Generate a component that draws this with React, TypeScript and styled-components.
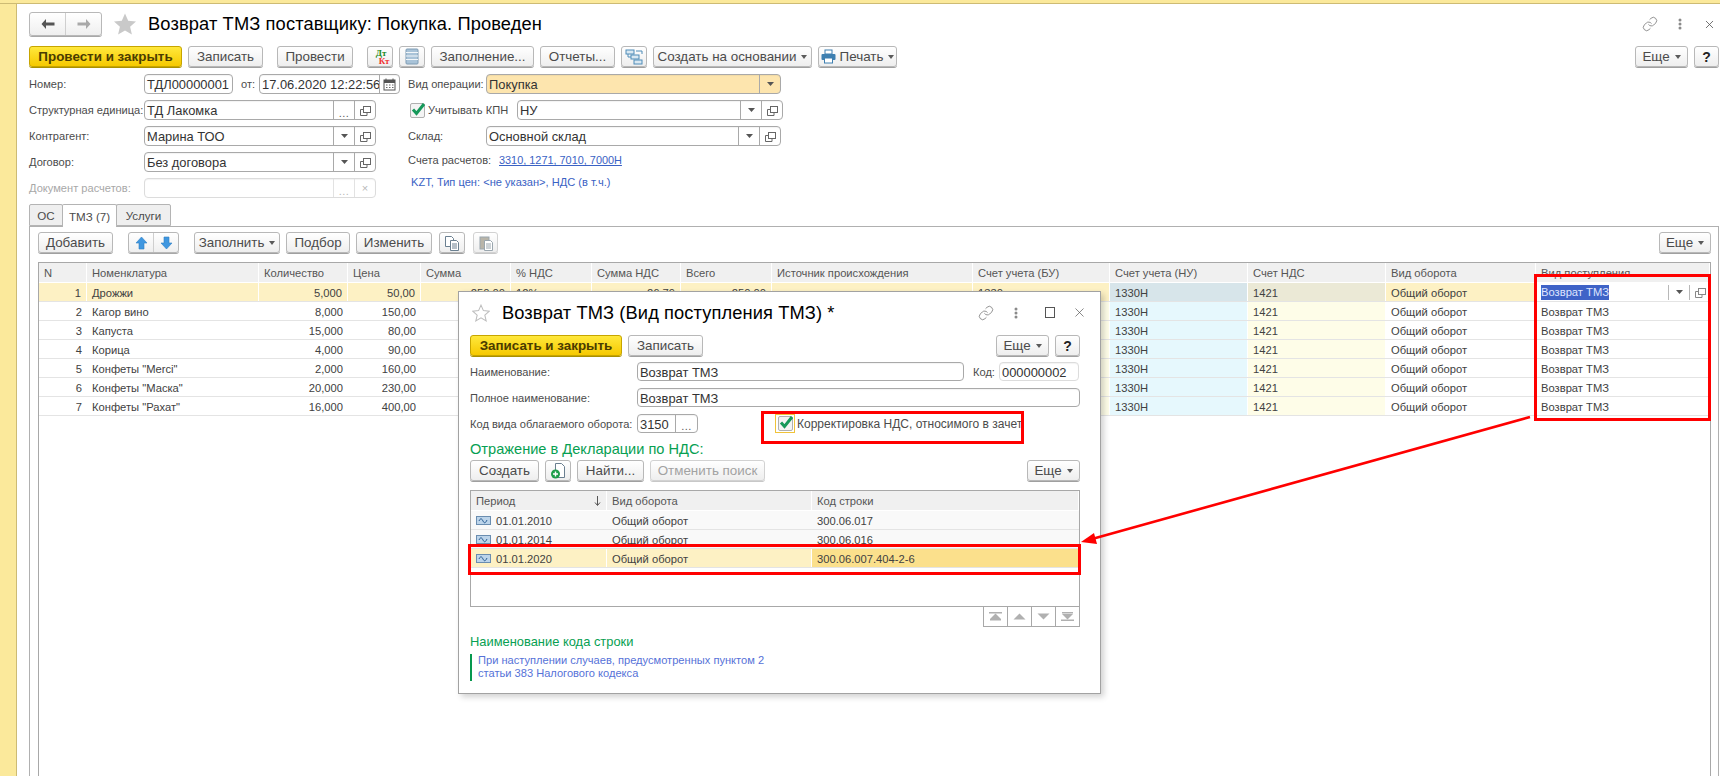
import React from "react";
import styled, { createGlobalStyle } from "styled-components";
import { Link as LinkIcon, X } from "lucide-react";

const Global = createGlobalStyle`
  html, body { margin: 0; padding: 0; background: #fff; }
  * { box-sizing: border-box; }
  body { font-family: "Liberation Sans", Arial, sans-serif; font-size: 12px; color: #4b4b4b; }
`;

const Page = styled.div`
  position: relative; width: 1720px; height: 776px; overflow: hidden;
  display: flex; flex-direction: column; background: #fff;
`;
const TopStrip = styled.div`height: 4px; flex: none; background: #fbe99b; border-bottom: 1px solid #cdbb74;`;
const Body = styled.div`flex: 1; display: flex; min-height: 0;`;
const SideStrip = styled.div`width: 17px; flex: none; background: #fbe99b; border-right: 1px solid #cdbb74;`;
const Main = styled.div`flex: 1; display: flex; flex-direction: column; padding: 8px 1px 0 12px; min-width: 0;`;

const TitleRow = styled.div`display: flex; align-items: center; height: 24px;`;
const NavGroup = styled.div<{ $w?: number; $h?: number; $ml?: number }>`
  display: flex; width: ${p => p.$w ?? 73}px; height: ${p => p.$h ?? 24}px; margin-left: ${p => p.$ml ?? 0}px; flex: none;
  border: 1px solid #b8b8b8; border-radius: 3px;
  background: linear-gradient(#fff, #efefef); box-shadow: 0 1px 0 #a8a8a8;
`;
const NavPart = styled.div<{ $line?: boolean }>`
  flex: 1; display: flex; align-items: center; justify-content: center;
  ${p => (p.$line ? "border-left: 1px solid #cfcfcf;" : "")}
`;
const Title = styled.h1`
  margin: 0; font-size: 18.3px; font-weight: 400; color: #000; white-space: nowrap; letter-spacing: 0.12px;
`;
const Spacer = styled.div`flex: 1;`;
const WindowTools = styled.div`display: flex; align-items: center; color: #777;`;
const ToolSlot = styled.div<{ $w: number }>`width: ${p => p.$w}px; flex: none; display: flex; justify-content: center; align-items: center;`;

const Toolbar = styled.div<{ $top?: number; $gap?: number }>`
  display: flex; align-items: flex-start; height: 22px; flex: none;
  margin-top: ${p => p.$top ?? 0}px; gap: ${p => p.$gap ?? 6}px;
`;
const Btn = styled.button<{ $w: number; $ml?: number; $off?: boolean }>`
  width: ${p => p.$w}px; height: 21px; flex: none; padding: 0; margin: 0 0 0 ${p => p.$ml ?? 0}px;
  display: inline-flex; align-items: center; justify-content: center; gap: 4px;
  font: 13.4px "Liberation Sans", Arial, sans-serif; white-space: nowrap;
  color: ${p => (p.$off ? "#a2a2a2" : "#4b4b4b")};
  border: 1px solid ${p => (p.$off ? "#d2d2d2" : "#b8b8b8")}; border-radius: 3px;
  background: linear-gradient(#ffffff, #eeeeee);
  box-shadow: 0 1px 0 ${p => (p.$off ? "#c8c8c8" : "#a0a0a0")};
`;
const PrimaryBtn = styled(Btn)`
  font-weight: 700; color: #4a3c00; border-color: #c7a500;
  background: linear-gradient(#ffe83c, #f6c900);
  box-shadow: 0 1px 0 #a99000;
`;
const HelpMark = styled.b`color: #222; font-weight: 700; font-size: 14px;`;
const Caret = styled.i`
  width: 0; height: 0; display: inline-block; border: 3.5px solid transparent; border-top: 4px solid #5a5a5a; border-bottom: 0;
  margin-left: 1px;
`;
const DtKt = styled.span`
  display: grid; grid-template-columns: 10px 10px; grid-template-rows: 8px 8px; font: 700 9px/8px "Liberation Serif", serif;
`;
const Dt = styled.span`color: #1c8a1c; grid-column: 1 / 3; grid-row: 1; padding-left: 2px;`;
const Kt = styled.span`color: #f03030; grid-column: 1 / 3; grid-row: 2; padding-left: 8px;`;

const Form = styled.div`display: flex; margin-top: 6px; flex: none;`;
const FormCol = styled.div<{ $w: number }>`width: ${p => p.$w}px; flex: none; display: flex; flex-direction: column; gap: 6px;`;
const Row = styled.div<{ $lift?: number }>`
  display: flex; align-items: center; height: 20px; padding-bottom: ${p => p.$lift ?? 0}px;
`;
const Label = styled.span<{ $w?: number; $off?: boolean; $ml?: number; $size?: number }>`
  ${p => (p.$w ? `width: ${p.$w}px; flex: none;` : "")}
  margin-left: ${p => p.$ml ?? 0}px; font-size: ${p => p.$size ?? 11.1}px; white-space: nowrap;
  color: ${p => (p.$off ? "#a8a8a8" : "#4b4b4b")};
`;
const Field = styled.div<{ $w: number; $h?: number; $bg?: string; $off?: boolean }>`
  width: ${p => p.$w}px; height: ${p => p.$h ?? 20}px; flex: none; display: flex; align-items: center;
  border: 1px solid ${p => (p.$off ? "#dcdcdc" : "#a9a9a9")}; border-radius: 4px; overflow: hidden;
  background: ${p => p.$bg ?? "#fff"}; box-shadow: inset 0 1px 1px rgba(0,0,0,.05);
`;
const FieldText = styled.span`
  flex: 1; min-width: 0; padding: 2px 0 0 2px; font-size: 12.9px; line-height: 18px; color: #333; white-space: nowrap; overflow: hidden;
`;
const Seg = styled.span<{ $w?: number; $off?: boolean }>`
  width: ${p => p.$w ?? 21}px; height: 100%; flex: none; display: flex; align-items: center; justify-content: center;
  border-left: 1px solid ${p => (p.$off ? "#e2e2e2" : "#a9a9a9")}; color: ${p => (p.$off ? "#b8b8b8" : "#5a5a5a")};
  font-size: 11px; background: transparent;
`;
const Ellipsis = styled.span`line-height: 8px; padding-top: 5px; letter-spacing: .4px;`;
const Check = styled.span<{ $ml?: number }>`
  width: 15px; height: 15px; flex: none; display: inline-flex; align-items: center; justify-content: center;
  border: 1px solid #b0b0b0; border-radius: 2px; background: #f4f4f4; position: relative; margin-left: ${p => p.$ml ?? 0}px;
`;
const FocusRing = styled.span<{ $ml: number }>`
  width: 20px; height: 19px; flex: none; display: inline-flex; align-items: center; justify-content: center;
  border: 1px solid #f0c33a; background: #fff; margin-left: ${p => p.$ml}px;
`;
const LinkText = styled.a<{ $u?: boolean; $ml?: number; $size?: number }>`
  color: #3a62c4; font-size: ${p => p.$size ?? 11.1}px; white-space: nowrap; margin-left: ${p => p.$ml ?? 0}px;
  ${p => (p.$u ? "text-decoration: underline;" : "")}
`;
const TopRow = styled.div`display: flex; align-items: flex-start; height: 20px; line-height: 8px;`;

const Tabs = styled.div`display: flex; margin-top: 6px; height: 22px; flex: none; position: relative; z-index: 1;`;
const Tab = styled.div<{ $w: number; $on?: boolean }>`
  width: ${p => p.$w}px; height: ${p => (p.$on ? 23 : 22)}px; display: flex; align-items: center; justify-content: center;
  font-size: 11.6px; color: #4b4b4b; border: 1px solid #b4b4b4; margin-left: -1px;
  ${p => (p.$on ? "border-bottom: 0;" : "")}
  border-radius: 2px 2px 0 0; background: ${p => (p.$on ? "#fff" : "#efefef")};
  &:first-child { margin-left: 0; }
`;
const Panel = styled.div`
  flex: 1; min-height: 0; display: flex; flex-direction: column; padding: 5px 7px 0 8px;
  border: 1px solid #b0b0b0; border-bottom: 0;
`;

const COLS = "48px 172px 89px 73px 90px 81px 89px 91px 201px 137px 138px 138px 150px 174px";
const Table = styled.div`flex: 1; min-height: 0; margin-top: 8px; border: 1px solid #a8a8a8; border-bottom: 0;`;
const HeadRow = styled.div<{ $cols: string }>`
  display: grid; grid-template-columns: ${p => p.$cols}; height: 20px; background: #f0f0f0; border-bottom: 1px solid #fff;
`;
const HeadCell = styled.div`
  display: flex; align-items: center; justify-content: space-between; padding: 0 5px; font-size: 11.2px; color: #555;
  border-right: 1px solid #fff; white-space: nowrap; overflow: hidden;
`;
const DataRow = styled.div<{ $cols: string }>`
  display: grid; grid-template-columns: ${p => p.$cols}; height: 19px; border-bottom: 1px solid #e4e4e4;
  &:first-of-type { margin-top: 1px; }
`;
const TONES: Record<string, string> = {
  plain: "transparent", sel: "#fdf1c4", blue: "#e6f8fd", cream: "#fefde8", blueSel: "#d7e5ea", creamSel: "#ebe9d6", active: "#fbe08c", soft: "#f9f9f9",
};
const Cell = styled.div<{ $tone?: string; $right?: boolean }>`
  display: flex; align-items: center; justify-content: ${p => (p.$right ? "flex-end" : "flex-start")};
  padding: 1px 5px 0; font-size: 11.2px; color: #414141; white-space: nowrap; overflow: hidden;
  background: ${p => TONES[p.$tone ?? "plain"]};
  ${p => (p.$tone && p.$tone !== "plain" && p.$tone !== "soft" ? "border-right: 1px solid #fff;" : "")}
`;
const EditCell = styled.div`display: flex; align-items: center; padding-left: 5px; height: 18px;`;
const Selected = styled.span`background: #3f63c7; color: #dfe6ff; font-size: 11.2px; line-height: 15px; width: 68px; flex: none; white-space: nowrap;`;
const EditFill = styled.span`flex: 1;`;
const EditSeg = styled.span`
  width: 21px; height: 15px; flex: none; display: flex; align-items: center; justify-content: center; border-left: 1px solid #b8b8b8;
`;

const Dialog = styled.div`
  position: absolute; left: 458px; top: 291px; width: 643px; height: 403px; z-index: 5;
  display: flex; flex-direction: column; padding: 0 20px 0 11px;
  background: #fff; border: 1px solid #a2a2a2; box-shadow: 3px 3px 6px rgba(0,0,0,.18);
`;
const DialogHead = styled.div`display: flex; align-items: center; height: 41px; flex: none; margin-right: -20px;`;
const DialogTitle = styled.h2`
  margin: 0 0 0 10px; font-size: 18.3px; font-weight: 400; color: #000; white-space: nowrap; letter-spacing: 0.1px;
`;
const DialogRow = styled.div<{ $top: number }>`display: flex; align-items: center; height: 19px; flex: none; margin-top: ${p => p.$top}px;`;
const GreenTitle = styled.div<{ $top: number; $size: number }>`
  color: #07a052; font-size: ${p => p.$size}px; line-height: 16px; margin-top: ${p => p.$top}px; flex: none; white-space: nowrap;
`;
const MiniTable = styled.div`margin-top: 8px; height: 117px; flex: none; border: 1px solid #a8a8a8;`;
const SEL_COLS = "136px 205px 1fr";
const Pager = styled.div`display: flex; justify-content: flex-end; flex: none; margin-top: -1px;`;
const PagerBtn = styled.div`
  width: 25px; height: 21px; margin-left: -1px; display: flex; align-items: center; justify-content: center; border: 1px solid #a8a8a8;
`;
const Note = styled.div`
  margin-top: 4px; padding-left: 6px; border-left: 2px solid #07984e; height: 27px; flex: none;
  color: #5672d8; font-size: 11.1px; line-height: 13px;
`;
const NoteLine = styled.div`white-space: nowrap;`;
const PeriodIcon = styled.span`display: inline-flex; margin-right: 5px;`;

const RedBox = styled.div<{ $x: number; $y: number; $w: number; $h: number }>`
  position: absolute; z-index: 7; left: ${p => p.$x}px; top: ${p => p.$y}px; width: ${p => p.$w}px; height: ${p => p.$h}px;
  border: 3px solid #f00; pointer-events: none;
`;
const ArrowLayer = styled.svg`position: absolute; left: 0; top: 0; z-index: 8; pointer-events: none;`;
const TickMark = styled.svg`position: absolute; left: -1px; top: -2px;`;
const DownSvg = styled.svg`transform: rotate(180deg);`;

const ArrowLeft = ({ c }: { c: string }) => (
  <svg width="16" height="12" viewBox="0 0 16 12"><path d="M6 1 1.5 6 6 11V7.5h8.5v-3H6z" fill={c} /></svg>
);
const ArrowRight = ({ c }: { c: string }) => (
  <svg width="16" height="12" viewBox="0 0 16 12"><path d="M10 1l4.5 5-4.5 5V7.5H1.5v-3H10z" fill={c} /></svg>
);
const Star = ({ s, outline }: { s: number; outline?: boolean }) => (
  <svg width={s} height={s} viewBox="0 0 24 24">
    <path d="M12 1.5l3.2 7.3 7.8.8-5.9 5.2 1.8 7.7L12 18.4l-6.9 4.1 1.8-7.7L1 9.6l7.8-.8z" fill={outline ? "#fff" : "#c9c9c9"} stroke={outline ? "#bdbdbd" : "none"} strokeWidth="1.4" />
  </svg>
);
const Kebab = () => (
  <svg width="4" height="12" viewBox="0 0 4 12"><circle cx="2" cy="2" r="1.5" fill="#8a8a8a" /><circle cx="2" cy="6" r="1.5" fill="#8a8a8a" /><circle cx="2" cy="10" r="1.5" fill="#8a8a8a" /></svg>
);
const Open = ({ c = "#666" }: { c?: string }) => (
  <svg width="11" height="11" viewBox="0 0 11 11" fill="none" stroke={c}><rect x="3.5" y="1.5" width="7" height="6" fill="#fff" /><path d="M3.5 4.5h-3v6h6.5v-3" /></svg>
);
const SmallCaret = () => (
  <svg width="7" height="4" viewBox="0 0 7 4"><path d="M0 0h7L3.5 4z" fill="#555" /></svg>
);
const Calendar = () => (
  <svg width="13" height="13" viewBox="0 0 13 13"><rect x="1" y="2" width="11" height="10" fill="none" stroke="#555" /><rect x="1" y="2" width="11" height="3" fill="#555" /><path d="M3 .5v3M10 .5v3" stroke="#555" /><path d="M3 7h1.5M6 7h1.5M9 7h1.5M3 9.5h1.5M6 9.5h1.5M9 9.5h1.5" stroke="#666" /></svg>
);
const Tick = () => (
  <TickMark width="17" height="15" viewBox="0 0 17 15"><path d="M3 7.5l3.5 4L14 2" fill="none" stroke="#16995a" strokeWidth="3" /></TickMark>
);
const ListIcon = () => (
  <svg width="14" height="17" viewBox="0 0 14 17"><rect x="1" y="1" width="12" height="15" rx="1" fill="#a9c3d8" stroke="#7f9cb4" /><path d="M1 4.5h12M1 8h12M1 11.5h12" stroke="#f2f6f9" /></svg>
);
const TreeIcon = () => (
  <svg width="18" height="16" viewBox="0 0 18 16" fill="none" stroke="#4f8cb8"><rect x="1" y="1" width="8" height="4" fill="#d9e8f2" /><rect x="6" y="6" width="8" height="4" fill="#d9e8f2" /><rect x="9" y="11" width="8" height="4" fill="#d9e8f2" /><path d="M11 2h6v3M3 5v3h3" /></svg>
);
const Printer = () => (
  <svg width="15" height="15" viewBox="0 0 15 15"><rect x="4" y="1" width="7" height="4" fill="#fff" stroke="#3d7fb0" /><rect x=".5" y="5" width="14" height="6" rx="1" fill="#3d7fb0" /><rect x="3.5" y="9" width="8" height="5" fill="#fff" stroke="#3d7fb0" /></svg>
);
const BlueArrow = () => (
  <svg width="13" height="14" viewBox="0 0 13 14"><path d="M6.5 1 12 7H9v6H4V7H1z" fill="#3f97e0" stroke="#2f7fc4" strokeWidth=".6" /></svg>
);
const BlueArrowDown = () => (
  <DownSvg width="13" height="14" viewBox="0 0 13 14"><path d="M6.5 1 12 7H9v6H4V7H1z" fill="#3f97e0" stroke="#2f7fc4" strokeWidth=".6" /></DownSvg>
);
const CopyDocs = ({ off }: { off?: boolean }) => (
  <svg width="16" height="16" viewBox="0 0 16 16" fill="#fff" stroke={off ? "#9aa6ae" : "#6a7f90"}>
    {off ? <rect x="2" y="2" width="9" height="12" fill="#b8b4a8" /> : <path d="M1.5 1.5h6l2 2v8h-8z" />}
    <path d="M6.5 5.5h6l2 2v8h-8z" /><path d="M8 9h5M8 11h5M8 13h5" />
  </svg>
);
const NewDoc = () => (
  <svg width="17" height="17" viewBox="0 0 17 17"><path d="M5.5 1.5h6l3 3v11h-9z" fill="#fff" stroke="#6a7f90" /><circle cx="5.5" cy="12" r="4.5" fill="#1e9e4a" /><path d="M3 12h5M5.5 9.5v5" stroke="#fff" strokeWidth="1.4" /></svg>
);
const PeriodGlyph = () => (
  <svg width="15" height="9" viewBox="0 0 15 9"><rect x=".5" y=".5" width="14" height="8" fill="#bcd4ea" stroke="#6a8db0" /><path d="M3 5c1.5-3 2.5-3 4 0s2.5 2 4-1" fill="none" stroke="#2c5f95" /></svg>
);
const PagerGlyph = ({ kind }: { kind: "first" | "up" | "down" | "last" }) => (
  <svg width="15" height="9" viewBox="0 0 15 9" fill="#b0b0b0">
    {kind === "first" && <><rect x="1" y="0" width="13" height="1.5" /><path d="M7.5 1.5 13 7H2z" /><rect x="2" y="7" width="11" height="1.5" /></>}
    {kind === "up" && <path d="M7.5 1.5 13.5 7.5H1.5z" />}
    {kind === "down" && <path d="M1.5 1.5h12l-6 6z" />}
    {kind === "last" && <><rect x="2" y="0" width="11" height="1.5" /><path d="M2 2h11L7.5 7.5z" /><rect x="1" y="7.5" width="13" height="1.5" /></>}
  </svg>
);

const goods: [string, string, string][] = [
  ["Дрожжи", "5,000", "50,00"],
  ["Кагор вино", "8,000", "150,00"],
  ["Капуста", "15,000", "80,00"],
  ["Корица", "4,000", "90,00"],
  ['Конфеты "Merci"', "2,000", "160,00"],
  ['Конфеты "Маска"', "20,000", "230,00"],
  ['Конфеты "Рахат"', "16,000", "400,00"],
];
const heads = ["N", "Номенклатура", "Количество", "Цена", "Сумма", "% НДС", "Сумма НДС", "Всего", "Источник происхождения", "Счет учета (БУ)", "Счет учета (НУ)", "Счет НДС", "Вид оборота", "Вид поступления"];
const periods = [
  ["01.01.2010", "300.06.017"],
  ["01.01.2014", "300.06.016"],
  ["01.01.2020", "300.06.007.404-2-6"],
];

export default function App() {
  return (
    <Page>
      <Global />
      <TopStrip />
      <Body>
        <SideStrip />
        <Main>
          <TitleRow>
            <NavGroup>
              <NavPart><ArrowLeft c="#555" /></NavPart>
              <NavPart $line><ArrowRight c="#a9a9a9" /></NavPart>
            </NavGroup>
            <ToolSlot $w={46}><Star s={24} /></ToolSlot>
            <Title>Возврат ТМЗ поставщику: Покупка. Проведен</Title>
            <Spacer />
            <WindowTools>
              <ToolSlot $w={20}><LinkIcon size={16} strokeWidth={1.2} /></ToolSlot>
              <ToolSlot $w={40}><Kebab /></ToolSlot>
              <ToolSlot $w={18}><X size={13} strokeWidth={1.5} color="#555" /></ToolSlot>
              <ToolSlot $w={1} />
            </WindowTools>
          </TitleRow>
          <Toolbar $top={10}>
            <PrimaryBtn $w={153}>Провести и закрыть</PrimaryBtn>
            <Btn $w={75}>Записать</Btn>
            <Btn $w={76} $ml={8}>Провести</Btn>
            <Btn $w={26} $ml={8}><DtKt><Dt>Дт</Dt><Kt>Кт</Kt></DtKt></Btn>
            <Btn $w={26}><ListIcon /></Btn>
            <Btn $w={103}>Заполнение...</Btn>
            <Btn $w={75}>Отчеты...</Btn>
            <Btn $w={26}><TreeIcon /></Btn>
            <Btn $w={159}>Создать на основании<Caret /></Btn>
            <Btn $w={79}><Printer />Печать<Caret /></Btn>
            <Spacer />
            <Btn $w={53}>Еще<Caret /></Btn>
            <Btn $w={25}><HelpMark>?</HelpMark></Btn>
          </Toolbar>
          <Form>
            <FormCol $w={379}>
              <Row>
                <Label $w={115}>Номер:</Label>
                <Field $w={89}><FieldText>ТДЛ00000001</FieldText></Field>
                <Label $w={18} $ml={8}>от:</Label>
                <Field $w={141}><FieldText>17.06.2020 12:22:56</FieldText><Seg $w={20}><Calendar /></Seg></Field>
              </Row>
              <Row>
                <Label $w={115}>Структурная единица:</Label>
                <Field $w={232}><FieldText>ТД Лакомка</FieldText><Seg><Ellipsis>...</Ellipsis></Seg><Seg><Open /></Seg></Field>
              </Row>
              <Row>
                <Label $w={115}>Контрагент:</Label>
                <Field $w={232}><FieldText>Марина ТОО</FieldText><Seg><SmallCaret /></Seg><Seg><Open /></Seg></Field>
              </Row>
              <Row>
                <Label $w={115}>Договор:</Label>
                <Field $w={232}><FieldText>Без договора</FieldText><Seg><SmallCaret /></Seg><Seg><Open /></Seg></Field>
              </Row>
              <Row>
                <Label $w={115} $off>Документ расчетов:</Label>
                <Field $w={232} $off><FieldText /><Seg $off><Ellipsis>...</Ellipsis></Seg><Seg $off>×</Seg></Field>
              </Row>
            </FormCol>
            <FormCol $w={400}>
              <Row>
                <Label $w={78}>Вид операции:</Label>
                <Field $w={295} $bg="#fde5ae"><FieldText>Покупка</FieldText><Seg $w={21}><SmallCaret /></Seg></Field>
              </Row>
              <Row>
                <Check $ml={2}><Tick /></Check>
                <Label $w={89} $ml={3}>Учитывать КПН</Label>
                <Field $w={266}><FieldText>НУ</FieldText><Seg><SmallCaret /></Seg><Seg><Open /></Seg></Field>
              </Row>
              <Row>
                <Label $w={78}>Склад:</Label>
                <Field $w={295}><FieldText>Основной склад</FieldText><Seg><SmallCaret /></Seg><Seg><Open /></Seg></Field>
              </Row>
              <Row $lift={4}>
                <Label $w={91}>Счета расчетов:</Label>
                <LinkText $u $size={10.9}>3310, 1271, 7010, 7000Н</LinkText>
              </Row>
              <TopRow>
                <LinkText $ml={3}>KZT, Тип цен: &lt;не указан&gt;, НДС (в т.ч.)</LinkText>
              </TopRow>
            </FormCol>
          </Form>
          <Tabs>
            <Tab $w={34}>ОС</Tab>
            <Tab $w={55} $on>ТМЗ (7)</Tab>
            <Tab $w={55}>Услуги</Tab>
          </Tabs>
          <Panel>
            <Toolbar>
              <Btn $w={75}>Добавить</Btn>
              <NavGroup $w={51} $h={21} $ml={9}>
                <NavPart><BlueArrow /></NavPart>
                <NavPart $line><BlueArrowDown /></NavPart>
              </NavGroup>
              <Btn $w={86} $ml={9}>Заполнить<Caret /></Btn>
              <Btn $w={64}>Подбор</Btn>
              <Btn $w={76}>Изменить</Btn>
              <Btn $w={26} $ml={1}><CopyDocs /></Btn>
              <Btn $w={25} $ml={2} $off><CopyDocs off /></Btn>
              <Spacer />
              <Btn $w={52}>Еще<Caret /></Btn>
            </Toolbar>
            <Table>
              <HeadRow $cols={COLS}>
                {heads.map(h => <HeadCell key={h}>{h}</HeadCell>)}
              </HeadRow>
              {goods.map((g, i) => {
                const sel = i === 0;
                const t = sel ? "sel" : "plain";
                return (
                  <DataRow key={g[0]} $cols={COLS}>
                    <Cell $tone={t} $right>{i + 1}</Cell>
                    <Cell $tone={t}>{g[0]}</Cell>
                    <Cell $tone={t} $right>{g[1]}</Cell>
                    <Cell $tone={t} $right>{g[2]}</Cell>
                    <Cell $tone={t} $right>{sel ? "250,00" : ""}</Cell>
                    <Cell $tone={t}>{sel ? "12%" : ""}</Cell>
                    <Cell $tone={t} $right>{sel ? "26,79" : ""}</Cell>
                    <Cell $tone={t} $right>{sel ? "250,00" : ""}</Cell>
                    <Cell $tone={t} />
                    <Cell $tone={sel ? "sel" : "cream"}>{sel ? "1330" : ""}</Cell>
                    <Cell $tone={sel ? "blueSel" : "blue"}>1330Н</Cell>
                    <Cell $tone={sel ? "creamSel" : "cream"}>1421</Cell>
                    <Cell $tone={t}>Общий оборот</Cell>
                    {sel ? (
                      <EditCell>
                        <Selected>Возврат ТМЗ</Selected>
                        <EditFill />
                        <EditSeg><SmallCaret /></EditSeg>
                        <EditSeg><Open c="#888" /></EditSeg>
                      </EditCell>
                    ) : (
                      <Cell>Возврат ТМЗ</Cell>
                    )}
                  </DataRow>
                );
              })}
            </Table>
          </Panel>
        </Main>
      </Body>

      <Dialog>
        <DialogHead>
          <ToolSlot $w={22}><Star s={18} outline /></ToolSlot>
          <DialogTitle>Возврат ТМЗ (Вид поступления ТМЗ) *</DialogTitle>
          <Spacer />
          <WindowTools>
            <ToolSlot $w={20}><LinkIcon size={16} strokeWidth={1.2} /></ToolSlot>
            <ToolSlot $w={40}><Kebab /></ToolSlot>
            <ToolSlot $w={28}><svg width="10" height="11" viewBox="0 0 10 11"><rect x=".5" y=".5" width="9" height="10" fill="none" stroke="#555" /></svg></ToolSlot>
            <ToolSlot $w={30}><X size={15} strokeWidth={1.1} color="#555" /></ToolSlot>
            <ToolSlot $w={6} />
          </WindowTools>
        </DialogHead>
        <Toolbar $top={2}>
          <PrimaryBtn $w={152}>Записать и закрыть</PrimaryBtn>
          <Btn $w={75}>Записать</Btn>
          <Spacer />
          <Btn $w={53}>Еще<Caret /></Btn>
          <Btn $w={25}><HelpMark>?</HelpMark></Btn>
        </Toolbar>
        <DialogRow $top={5}>
          <Label $w={167}>Наименование:</Label>
          <Field $w={327} $h={19}><FieldText>Возврат ТМЗ</FieldText></Field>
          <Label $w={26} $ml={9}>Код:</Label>
          <Field $w={80} $h={19} $off><FieldText>000000002</FieldText></Field>
        </DialogRow>
        <DialogRow $top={7}>
          <Label $w={167}>Полное наименование:</Label>
          <Field $w={443} $h={19}><FieldText>Возврат ТМЗ</FieldText></Field>
        </DialogRow>
        <DialogRow $top={7}>
          <Label $w={167}>Код вида облагаемого оборота:</Label>
          <Field $w={61} $h={19}><FieldText>3150</FieldText><Seg $w={22}><Ellipsis>...</Ellipsis></Seg></Field>
          <FocusRing $ml={77}><Check><Tick /></Check></FocusRing>
          <Label $ml={2} $size={12}>Корректировка НДС, относимого в зачет</Label>
        </DialogRow>
        <GreenTitle $top={8} $size={14.6}>Отражение в Декларации по НДС:</GreenTitle>
        <Toolbar $top={3}>
          <Btn $w={69}>Создать</Btn>
          <Btn $w={26}><NewDoc /></Btn>
          <Btn $w={67}>Найти...</Btn>
          <Btn $w={115} $off>Отменить поиск</Btn>
          <Spacer />
          <Btn $w={53}>Еще<Caret /></Btn>
        </Toolbar>
        <MiniTable>
          <HeadRow $cols={SEL_COLS}>
            <HeadCell>Период<svg width="7" height="10" viewBox="0 0 7 10"><path d="M3.5 0v9M1 6.5l2.5 3 2.5-3" fill="none" stroke="#555" /></svg></HeadCell>
            <HeadCell>Вид оборота</HeadCell>
            <HeadCell>Код строки</HeadCell>
          </HeadRow>
          {periods.map((p, i) => {
            const sel = i === 2;
            const t = sel ? "sel" : "soft";
            return (
              <DataRow key={p[0]} $cols={SEL_COLS}>
                <Cell $tone={t}><PeriodIcon><PeriodGlyph /></PeriodIcon>{p[0]}</Cell>
                <Cell $tone={t}>Общий оборот</Cell>
                <Cell $tone={sel ? "active" : t}>{p[1]}</Cell>
              </DataRow>
            );
          })}
        </MiniTable>
        <Pager>
          <PagerBtn><PagerGlyph kind="first" /></PagerBtn>
          <PagerBtn><PagerGlyph kind="up" /></PagerBtn>
          <PagerBtn><PagerGlyph kind="down" /></PagerBtn>
          <PagerBtn><PagerGlyph kind="last" /></PagerBtn>
        </Pager>
        <GreenTitle $top={7} $size={12.9}>Наименование кода строки</GreenTitle>
        <Note>
          <NoteLine>При наступлении случаев, предусмотренных пунктом 2</NoteLine>
          <NoteLine>статьи 383 Налогового кодекса</NoteLine>
        </Note>
      </Dialog>

      <RedBox $x={1534} $y={274} $w={177} $h={147} />
      <RedBox $x={761} $y={411} $w={263} $h={33} />
      <RedBox $x={468} $y={544} $w={613} $h={31} />
      <ArrowLayer width="1720" height="776" viewBox="0 0 1720 776">
        <path d="M1530 417 1092 539" stroke="#f00" strokeWidth="2.6" fill="none" />
        <path d="M1081 542 1094 533 1097 544z" fill="#f00" />
      </ArrowLayer>
    </Page>
  );
}
